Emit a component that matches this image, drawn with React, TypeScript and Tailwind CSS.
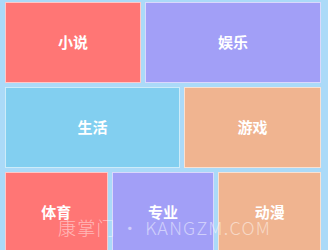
import React from 'react';

type Tile = { label: string; color: string; width?: string };

const rows: Tile[][] = [
  [
    { label: '小说', color: 'bg-[#ff7675]', width: 'w-[136px]' },
    { label: '娱乐', color: 'bg-[#a29ff7]' },
  ],
  [
    { label: '生活', color: 'bg-[#82cff0]', width: 'w-[175px]' },
    { label: '游戏', color: 'bg-[#f0b490]' },
  ],
  [
    { label: '体育', color: 'bg-[#ff7675]' },
    { label: '专业', color: 'bg-[#a29ff7]' },
    { label: '动漫', color: 'bg-[#f0b490]' },
  ],
];

const Box = ({ tile }: { tile: Tile }) => (
  <div
    className={`${tile.color} ${tile.width ?? 'flex-1'} h-[81px] border border-white/60 flex items-center justify-center text-white text-[15px] font-semibold`}
  >
    {tile.label}
  </div>
);

const App = () => (
  <div
    className="relative w-[328px] h-[250px] overflow-hidden bg-[#abdaf8]"
    style={{ fontFamily: '"Noto Sans CJK SC", "Noto Sans", sans-serif' }}
  >
    <div className="flex flex-col gap-[4px] pt-[2px] pl-[5px] w-[321px]">
      {rows.map((row, i) => (
        <div key={i} className="flex gap-[4px]">
          {row.map((t) => (
            <Box key={t.label} tile={t} />
          ))}
        </div>
      ))}
    </div>
    {/* watermark */}
    <div className="absolute left-[58px] top-[214px] text-[18px] font-light text-white/50 whitespace-nowrap tracking-[1.2px]">
      康掌门 • KANGZM.COM
    </div>
  </div>
);

export default App;
